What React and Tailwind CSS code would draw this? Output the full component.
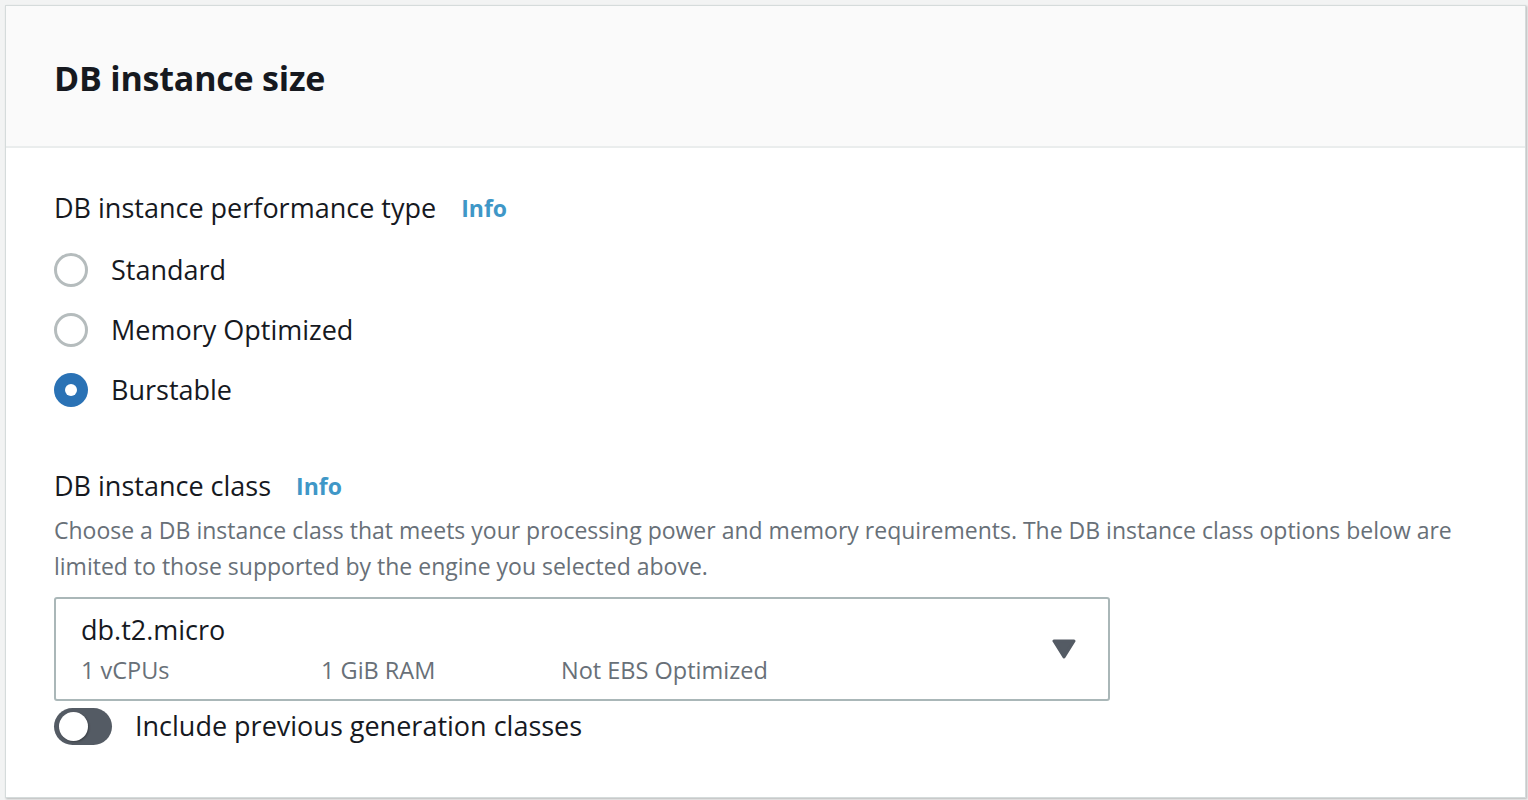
import React from 'react';

function Radio({ label, checked }) {
  return (
    <label className="flex items-center h-[60px]">
      {checked ? (
        <span className="w-[34px] h-[34px] rounded-full bg-[#2a72b5] flex items-center justify-center">
          <span className="w-[12px] h-[12px] rounded-full bg-white" />
        </span>
      ) : (
        <span className="w-[34px] h-[34px] rounded-full border-[3px] border-[#b5bcbd] bg-white" />
      )}
      <span className="ml-[23px] text-[27px] text-[#16191f]">{label}</span>
    </label>
  );
}

export default function App() {
  return (
    <div
      className="w-[1528px] h-[800px] bg-[#f2f3f3] pt-[5px] pl-[5px] overflow-hidden"
      style={{ fontFamily: '"Open Sans", "Noto Sans", Arial, sans-serif' }}
    >
      <div className="w-[1521px] h-[793px] bg-white border border-[#d5dbdb] shadow-[1px_1px_2px_rgba(0,0,0,0.25)] flex flex-col">
        {/* Header */}
        <div className="h-[142px] bg-[#fafafa] border-b-2 border-[#eaeded] flex items-center pl-[48px] pt-[4px]">
          <h2 className="text-[34px] font-bold text-[#16191f] tracking-[-0.2px]">DB instance size</h2>
        </div>

        {/* Body */}
        <div className="pl-[48px] pt-[42px]">
          <div className="flex items-center h-[36px]">
            <span className="text-[27px] text-[#16191f]">DB instance performance type</span>
            <a className="ml-[25px] text-[23px] font-bold text-[#3f97c7]">Info</a>
          </div>

          <div className="mt-[14px] flex flex-col">
            <Radio label="Standard" />
            <Radio label="Memory Optimized" />
            <Radio label="Burstable" checked />
          </div>

          <div className="mt-[48px] flex items-center h-[36px]">
            <span className="text-[27px] text-[#16191f]">DB instance class</span>
            <a className="ml-[25px] text-[23px] font-bold text-[#3f97c7]">Info</a>
          </div>
          <p className="mt-[8px] text-[23px] leading-[36px] text-[#687078] w-[1420px]">
            Choose a DB instance class that meets your processing power and memory requirements. The DB instance class options below are limited to those supported by the engine you selected above.
          </p>

          <div className="mt-[13px] w-[1056px] h-[104px] border-2 border-[#aab7b8] rounded-[3px] flex items-center pl-[25px] pr-[32px]">
            <div className="flex-1 flex flex-col">
              <span className="text-[27px] leading-[36px] text-[#16191f]">db.t2.micro</span>
              <div className="mt-[6px] flex text-[23.5px] leading-[32px] text-[#687078]">
                <span className="w-[240px]">1 vCPUs</span>
                <span className="w-[240px]">1 GiB RAM</span>
                <span>Not EBS Optimized</span>
              </div>
            </div>
            <svg width="24" height="20" viewBox="0 0 24 20">
              <path d="M2 2 H22 L12 18 Z" fill="#545b64" stroke="#545b64" strokeWidth="3" strokeLinejoin="round" />
            </svg>
          </div>

          <div className="mt-[5px] flex items-center">
            <span className="relative w-[58px] h-[37px] rounded-full bg-[#545b64]">
              <span className="absolute left-[5px] top-[4px] w-[29px] h-[29px] rounded-full bg-white shadow-[1px_1px_2px_rgba(0,0,0,0.3)]" />
            </span>
            <span className="ml-[23px] text-[27px] text-[#16191f]">Include previous generation classes</span>
          </div>
        </div>
      </div>
    </div>
  );
}
